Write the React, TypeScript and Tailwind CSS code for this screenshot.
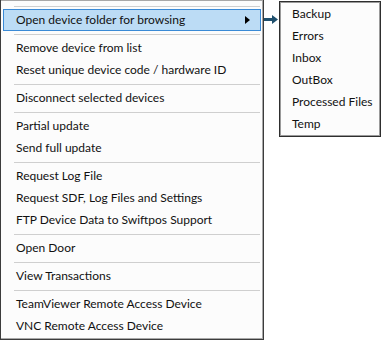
import React from 'react';

type Entry = { label: string; sub?: boolean } | 'sep';

const mainItems: Entry[] = [
  'sep',
  { label: 'Open device folder for browsing', sub: true },
  'sep',
  { label: 'Remove device from list' },
  { label: 'Reset unique device code / hardware ID' },
  'sep',
  { label: 'Disconnect selected devices' },
  'sep',
  { label: 'Partial update' },
  { label: 'Send full update' },
  'sep',
  { label: 'Request Log File' },
  { label: 'Request SDF, Log Files and Settings' },
  { label: 'FTP Device Data to Swiftpos Support' },
  'sep',
  { label: 'Open Door' },
  'sep',
  { label: 'View Transactions' },
  'sep',
  { label: 'TeamViewer Remote Access Device' },
  { label: 'VNC Remote Access Device' },
];

const folders = ['Backup', 'Errors', 'Inbox', 'OutBox', 'Processed Files', 'Temp'];

function MenuRow({ label, sub }: { label: string; sub?: boolean }) {
  if (sub) {
    return (
      <div className="h-[22px] mx-[1px] flex items-center justify-between border border-[#3a8ad6] bg-[#bcdcf5] pl-[12px] pr-[10px]">
        <span>{label}</span>
        <svg width="5" height="8" viewBox="0 0 5 8">
          <path d="M0 0 L5 4 L0 8 Z" fill="#000" />
        </svg>
      </div>
    );
  }
  return <div className="h-[22px] flex items-center pl-[14px]">{label}</div>;
}

export default function App() {
  return (
    <div
      className="w-[382px] h-[340px] bg-white flex text-[12px] text-[#111]"
      style={{ fontFamily: 'Lato, "Segoe UI", sans-serif' }}
    >
      <div className="w-[264px] h-[340px] border-l border-r border-b border-[#3c3c3c]">
        <div className="h-full bg-[#fcfcfc] border-t border-r border-b border-[#a8a8a8] pt-[2px] pl-[1px]">
          {mainItems.map((it, i) =>
            it === 'sep' ? (
              <div key={i} className="h-[6px] flex items-center pl-[12px] pr-[2px]">
                <div className="h-px w-full bg-[#cfcfcf]" />
              </div>
            ) : (
              <MenuRow key={i} label={it.label} sub={it.sub} />
            )
          )}
        </div>
      </div>

      <div className="w-[15px] pt-[15px]">
        <svg width="15" height="9" viewBox="0 0 15 9">
          <rect x="0" y="3" width="9" height="3" fill="#1f506e" />
          <path d="M8 0 L14 4.5 L8 9 Z" fill="#1f506e" />
        </svg>
      </div>

      <div className="self-start mt-[1px] w-[102px] border border-[#2e2e2e] bg-[#fcfcfc]">
        <div className="border border-[#9a9a9a]">
          {folders.map((f) => (
            <div key={f} className="h-[22px] flex items-center pl-[11px]">
              {f}
            </div>
          ))}
        </div>
      </div>
    </div>
  );
}
